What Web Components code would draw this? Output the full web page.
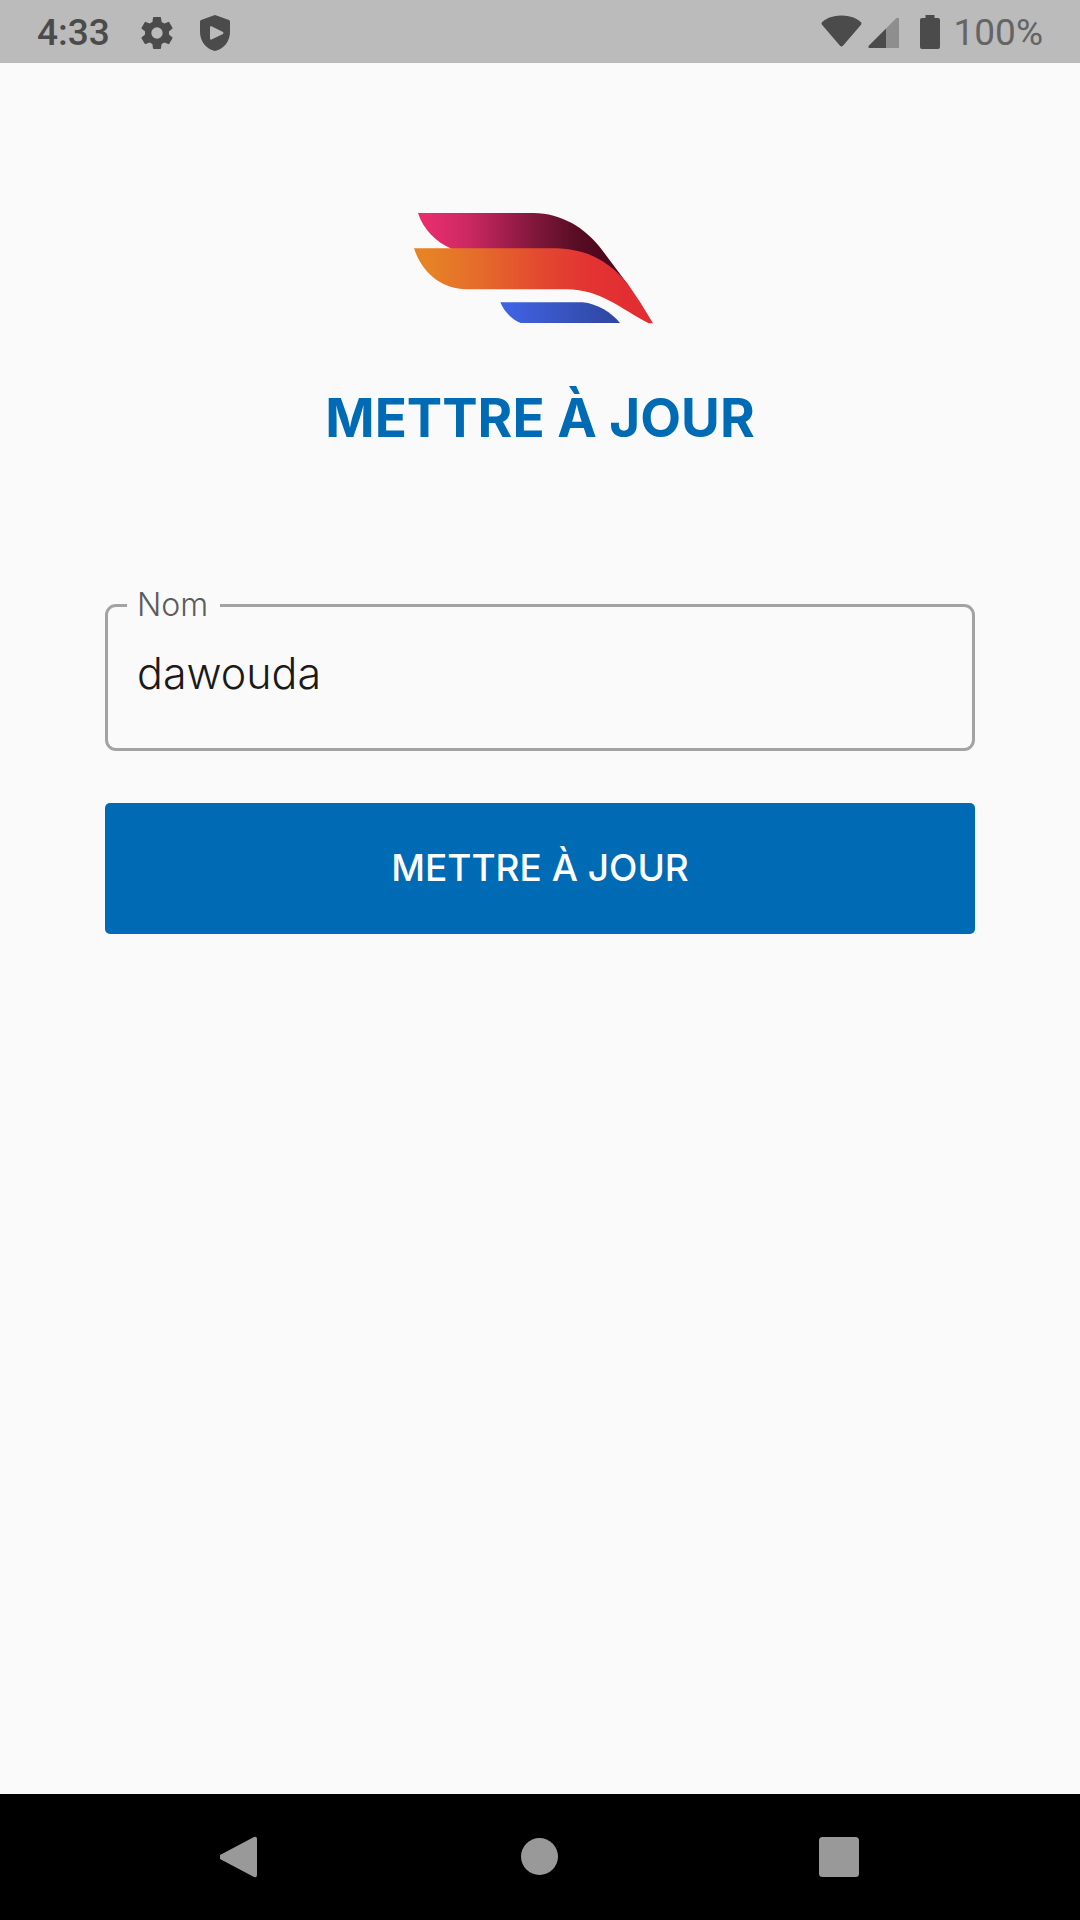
<!DOCTYPE html>
<html lang="fr">
<head>
<meta charset="utf-8">
<meta name="viewport" content="width=device-width, initial-scale=1">
<title>Mettre à jour</title>
<style>
  html, body { height: 100%; margin: 0; }
  body { background: #fafafa; font-family: Inter, "Liberation Sans", sans-serif; }
</style>
</head>
<body>
<update-screen></update-screen>
<script>
class Base extends HTMLElement {
  constructor() {
    super();
    this.attachShadow({ mode: 'open' }).innerHTML = this.render();
  }
}

customElements.define('status-bar', class extends Base {
  render() {
    return `<style>
      :host { display: flex; align-items: center; justify-content: space-between; box-sizing: border-box;
        height: 63px; padding: 2px 37px 0; background: #bbb; color: #4b4b4b;
        font: 500 37px/44px Roboto, sans-serif; }
      div { display: flex; align-items: center; }
      svg { display: block; overflow: visible; fill: currentColor; }
      .gear { margin-left: 29px; }
      .shield { margin-left: 22px; }
      .signal { margin-left: 6px; }
      .battery { margin: 0 14px 0 20px; }
      .level { font-weight: 400; color: #646464; }
    </style>
    <div>
      <span>4:33</span>
      <svg class="gear" width="36" height="36" viewBox="1.2 1.2 21.6 21.6"><path d="M19.14 12.94c.04-.3.06-.61.06-.94 0-.32-.02-.64-.07-.94l2.03-1.58a.49.49 0 0 0 .12-.61l-1.92-3.32a.49.49 0 0 0-.59-.22l-2.39.96c-.5-.38-1.03-.7-1.62-.94l-.36-2.54a.48.48 0 0 0-.48-.41h-3.84a.47.47 0 0 0-.47.41l-.36 2.54c-.59.24-1.13.57-1.62.94l-2.39-.96a.48.48 0 0 0-.59.22L2.74 8.87a.47.47 0 0 0 .12.61l2.03 1.58c-.05.3-.09.63-.09.94s.02.64.07.94l-2.03 1.58a.49.49 0 0 0-.12.61l1.92 3.32c.12.22.37.29.59.22l2.39-.96c.5.38 1.03.7 1.62.94l.36 2.54c.05.24.24.41.48.41h3.84c.24 0 .44-.17.47-.41l.36-2.54c.59-.24 1.13-.56 1.62-.94l2.39.96c.22.08.47 0 .59-.22l1.92-3.32a.47.47 0 0 0-.12-.61zM12 15.400a3.400 3.400 0 1 1 0-6.800 3.400 3.400 0 0 1 0 6.800z"/></svg>
      <svg class="shield" width="36" height="36" viewBox="0 0 36 36"><path fill-rule="evenodd" d="M18 0 32 5Q33 5.500 33 6.500V17C33 26 27 34 18 36 9 34 3 26 3 17V6.500Q3 5.500 4 5ZM14 11Q13 11 13 12.500V23.500Q13 25 14.500 24.500L26 19Q27 18 26 17L15 11.500Z"/></svg>
    </div>
    <div>
      <svg width="41" height="34" viewBox="0 1 42 34"><path d="M21 0C32 0 38 4 41 7Q42 8 41 9.500L22.500 31Q21 32.500 19.500 31L1 9.500Q0 8 1 7C4 4 10 0 21 0Z"/></svg>
      <svg class="signal" width="32" height="32" viewBox="0 0 32 32"><path fill="#8e8e8e" d="M18 11.500 28.500 1Q31 0 31 2V31H18Z"/><path d="M18 11.500V31H1.500Q-.5 30.500 1 28.500Z"/></svg>
      <svg class="battery" width="20" height="34" viewBox="0 1 20 34"><path d="M5.500 0h9v3H18q2 0 2 2v27q0 2-2 2H2q-2 0-2-2V5q0-2 2-2h3.500z"/></svg>
      <span class="level">100%</span>
    </div>`;
  }
});

customElements.define('brand-logo', class extends Base {
  render() {
    return `<style>
      :host, svg { display: block; }
    </style>
    <svg width="252" height="112" viewBox="42 36 756 336" role="img" aria-label="Logo">
      <defs>
        <linearGradient id="pink" gradientUnits="userSpaceOnUse" x1="55" y1="0" x2="600" y2="0">
          <stop offset="0.05" stop-color="#e72e6d"/><stop offset="0.28" stop-color="#cb2861"/><stop offset="0.62" stop-color="#84183d"/><stop offset="0.88" stop-color="#580c24"/><stop offset="1" stop-color="#50081f"/>
        </linearGradient>
        <linearGradient id="orange" gradientUnits="userSpaceOnUse" x1="45" y1="0" x2="690" y2="0">
          <stop offset="0.05" stop-color="#e68325"/><stop offset="0.3" stop-color="#e56b2b"/><stop offset="0.6" stop-color="#e34730"/><stop offset="0.8" stop-color="#e33432"/><stop offset="1" stop-color="#e22d31"/>
        </linearGradient>
        <linearGradient id="blue" gradientUnits="userSpaceOnUse" x1="300" y1="0" x2="660" y2="0">
          <stop offset="0.1" stop-color="#4061e0"/><stop offset="0.7" stop-color="#344fb3"/><stop offset="1" stop-color="#2e469f"/>
        </linearGradient>
      </defs>
      <path fill="url(#pink)" d="M54 39H400C485 40 555 83 604 147Q640 195 684 254L500 170H200L154 146C106 125 70 88 54 39Z"/>
      <path fill="url(#orange)" d="M42 145H455C555 145 622 178 682 250Q722 306 759 370H746C665 328 600 268 500 268H200C125 267 67 220 42 145Z"/>
      <path fill="url(#blue)" d="M301 307H548C592 311 636 339 660 369H362C337 360 312 335 301 307Z"/>
    </svg>`;
  }
});

customElements.define('outlined-field', class extends Base {
  render() {
    return `<style>
      :host { display: block; }
      fieldset { box-sizing: border-box; min-width: 0; height: 163px; margin: 0; padding: 0 31px 0 19px;
        border: 3px solid #a3a3a3; border-radius: 11px; }
      legend { padding: 0 12px 0 10px; font-size: 32px; font-weight: 300; line-height: 34px; color: #5c5c5c; }
      label { display: block; }
      input { display: block; box-sizing: border-box; width: 100%; height: 84px; margin: 9px 0 0; padding: 0 0 0 10px;
        border: 0; outline: 0; background: none; font: 300 43px/52px Inter, "Liberation Sans", sans-serif; color: #1a1a1a; }
    </style>
    <fieldset>
      <legend><label for="field">${this.getAttribute('label')}</label></legend>
      <input id="field" type="text" value="${this.getAttribute('value')}">
    </fieldset>`;
  }
});

customElements.define('primary-button', class extends Base {
  render() {
    return `<style>
      :host { display: block; }
      button { display: block; width: 100%; height: 131px; padding: 0 0 2px; border: 0; border-radius: 5px;
        background: #006bb5; color: #fff; font: 500 37px/44px Inter, "Liberation Sans", sans-serif; }
    </style>
    <button type="button"><slot></slot></button>`;
  }
});

customElements.define('nav-bar', class extends Base {
  render() {
    return `<style>
      :host { display: flex; justify-content: center; height: 126px; background: #000; }
      button { flex: 0 1 299px; display: grid; place-items: center; padding: 0; border: 0; background: none; }
      svg { display: block; fill: #999; }
    </style>
    <button type="button" aria-label="Retour"><svg width="42" height="42" viewBox="1 0 42 42"><path d="M1 19 35 1q3-1 3 2v36q0 3-3 2L1 23q-2-2 0-4z"/></svg></button>
    <button type="button" aria-label="Accueil"><svg width="38" height="38" viewBox="0 0 38 38"><circle cx="18.500" cy="18.500" r="18.500"/></svg></button>
    <button type="button" aria-label="Applications récentes"><svg width="40" height="40" viewBox="0 0 40 40"><rect width="40" height="40" rx="3.500"/></svg></button>`;
  }
});

customElements.define('update-screen', class extends Base {
  render() {
    return `<style>
      :host { display: flex; flex-direction: column; min-height: 100%; }
      main { flex: 1; display: flex; flex-direction: column; align-items: stretch; padding: 149px 105px 0; }
      brand-logo { align-self: center; }
      h1 { margin: 64px 0 0; text-align: center; color: #006bb5; font-size: 53px; font-weight: 700; line-height: 60px; }
      outlined-field { margin-top: 140px; }
      primary-button { margin-top: 52px; }
    </style>
    <status-bar></status-bar>
    <main>
      <brand-logo></brand-logo>
      <h1>METTRE À JOUR</h1>
      <outlined-field label="Nom" value="dawouda"></outlined-field>
      <primary-button>METTRE À JOUR</primary-button>
    </main>
    <nav-bar></nav-bar>`;
  }
});
</script>
</body>
</html>
